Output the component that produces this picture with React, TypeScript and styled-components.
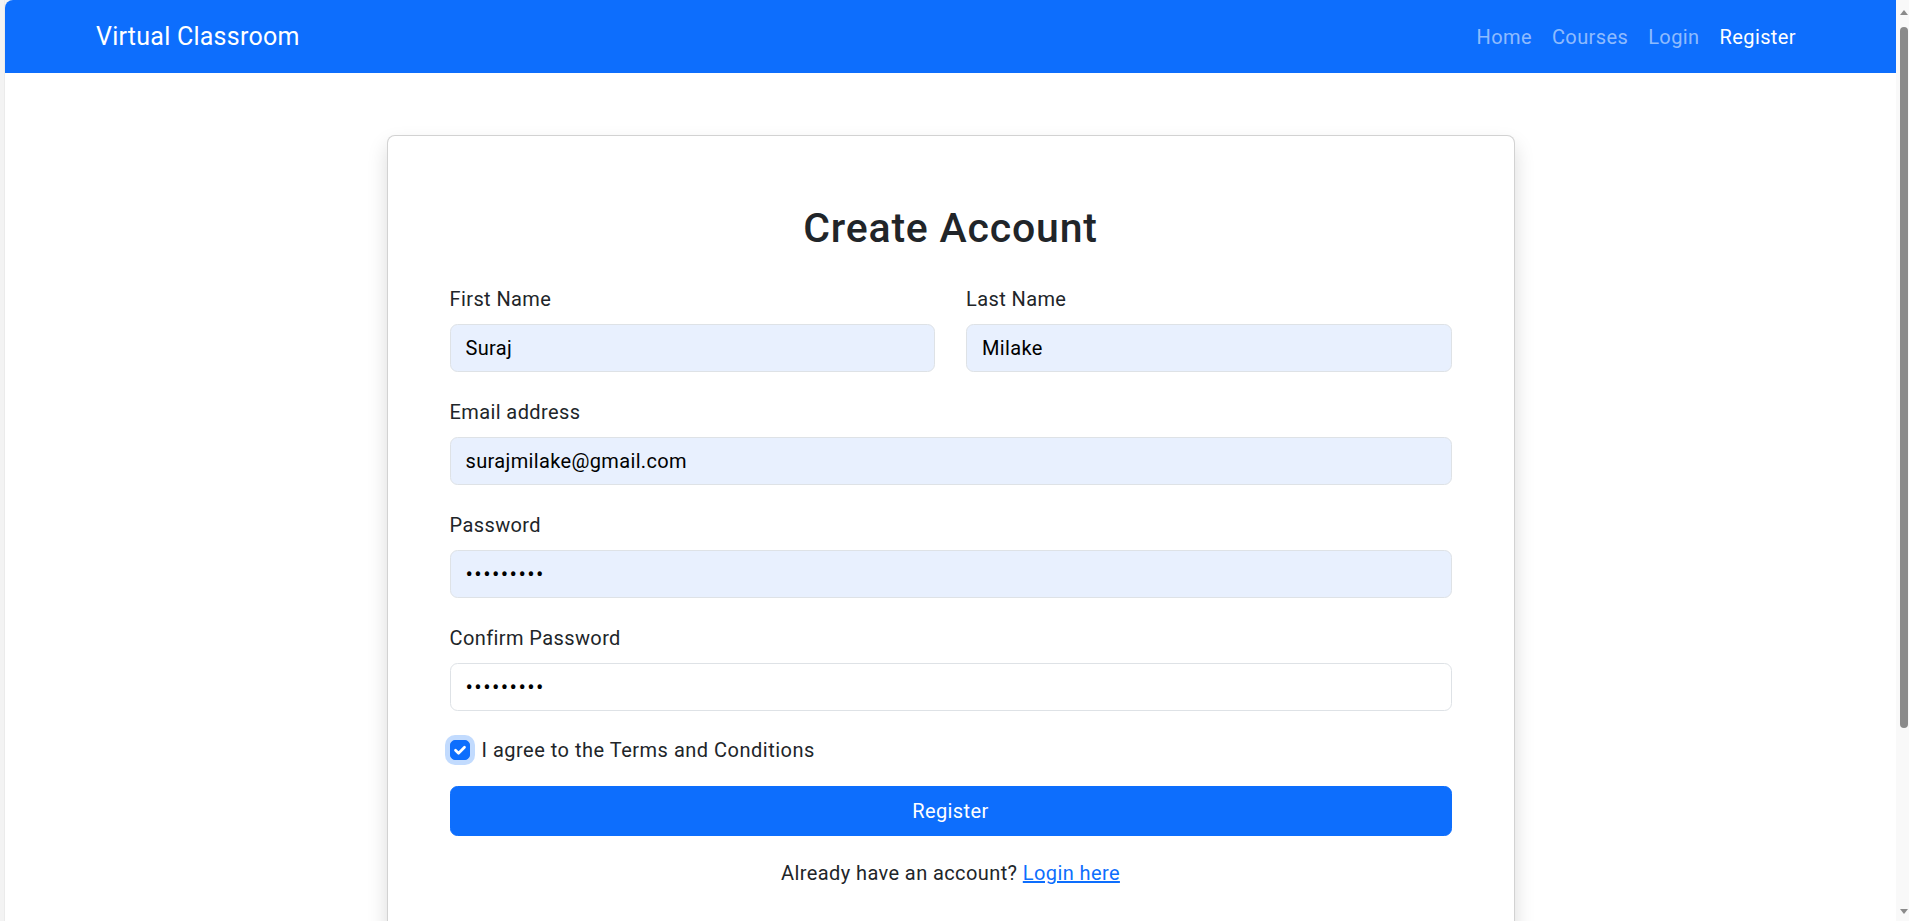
import React from "react";
import styled, { createGlobalStyle } from "styled-components";

const GlobalStyle = createGlobalStyle`
  * { box-sizing: border-box; }
  html, body { margin: 0; padding: 0; height: 100%; overflow: hidden; }
  body {
    font-family: "Segoe UI", Roboto, "Noto Sans", "Liberation Sans", sans-serif;
    color: #212529;
    background: #ffffff;
    letter-spacing: 0.4px;
  }
`;

const Viewport = styled.div`
  display: flex;
  height: 100vh;
  width: 100vw;
  overflow: hidden;
  background: #f3f3f3;
`;

const FrameEdge = styled.div`
  flex: 0 0 5px;
  background: #f3f3f3;
  border-right: 1px solid #ebebeb;
`;

const Page = styled.div`
  flex: 1;
  display: flex;
  flex-direction: column;
  overflow: hidden;
  background: #ffffff;
  border-top-left-radius: 8px;
`;

const Navbar = styled.nav`
  flex: 0 0 73px;
  display: flex;
  align-items: center;
  justify-content: space-between;
  padding: 0 90px 0 91px;
  background: #0d6efd;
`;

const Brand = styled.a`
  font-size: 25px;
  line-height: 30px;
  letter-spacing: 0.25px;
  color: #ffffff;
  text-decoration: none;
`;

const NavLinks = styled.ul`
  display: flex;
  list-style: none;
  margin: 0;
  padding: 0;
`;

const NavLink = styled.a<{ $active?: boolean }>`
  display: block;
  padding: 10px;
  font-size: 20px;
  line-height: 30px;
  letter-spacing: 0.4px;
  text-decoration: none;
  color: ${(p) => (p.$active ? "#ffffff" : "rgba(255, 255, 255, 0.55)")};
`;

const Main = styled.main`
  flex: 1;
  padding: 62px 0 60px;
`;

const Card = styled.section`
  width: 1128px;
  margin: 0 auto;
  border: 1px solid rgba(0, 0, 0, 0.175);
  border-radius: 8px;
  background: #ffffff;
  box-shadow: 0 10px 20px rgba(0, 0, 0, 0.15);
  padding: 60px 62px;
`;

const Title = styled.h2`
  margin: 8px 0 32px;
  text-align: center;
  font-size: 41px;
  line-height: 48px;
  font-weight: 500;
  letter-spacing: 0.8px;
  color: #212529;
`;

const Form = styled.form`
  display: flex;
  flex-direction: column;
`;

const Row = styled.div`
  display: grid;
  grid-template-columns: 1fr 1fr;
  column-gap: 31px;
`;

const Group = styled.div`
  margin-bottom: 25px;
`;

const Label = styled.label`
  display: block;
  margin-bottom: 10px;
  font-size: 20px;
  line-height: 30px;
  color: #212529;
`;

const Input = styled.input<{ $filled?: boolean }>`
  display: block;
  width: 100%;
  height: 48px;
  padding: 0 15px;
  font-family: inherit;
  font-size: 20px;
  letter-spacing: 0.35px;
  color: #000000;
  background: ${(p) => (p.$filled ? "#e8f0fe" : "#ffffff")};
  border: 1px solid #dee2e6;
  border-radius: 7.5px;
  outline: none;

  &[type="password"] {
    font-size: 22px;
    letter-spacing: 1.4px;
  }
`;

const CheckRow = styled.label`
  display: flex;
  align-items: center;
  gap: 12px;
  height: 30px;
  margin: -1px 0 21px;
  font-size: 20px;
  line-height: 30px;
  letter-spacing: 0.5px;
  color: #212529;
`;

const CheckBox = styled.span`
  display: flex;
  align-items: center;
  justify-content: center;
  width: 20px;
  height: 20px;
  border-radius: 5px;
  background: #0d6efd;
  border: 1px solid #0d6efd;
  box-shadow: 0 0 0 5px rgba(13, 110, 253, 0.25);
`;

const SubmitButton = styled.button`
  display: block;
  width: 100%;
  height: 50px;
  border: 1px solid #0d6efd;
  border-radius: 7.5px;
  background: #0d6efd;
  color: #ffffff;
  font-family: inherit;
  font-size: 20px;
  line-height: 30px;
  letter-spacing: 0.4px;
`;

const FooterText = styled.p`
  margin: 22px 0 0;
  text-align: center;
  font-size: 20px;
  line-height: 30px;
  color: #212529;
`;

const TextLink = styled.a`
  color: #0d6efd;
  text-decoration: underline;
`;

const ScrollRail = styled.div`
  flex: 0 0 13px;
  display: flex;
  flex-direction: column;
  align-items: flex-start;
  padding: 10px 1px 7px 4px;
  background: #f9f9f9;
`;

const ArrowUp = styled.span`
  width: 0;
  height: 0;
  border-left: 4px solid transparent;
  border-right: 4px solid transparent;
  border-bottom: 5px solid #8b8b8b;
`;

const ArrowDown = styled.span`
  margin-top: auto;
  width: 0;
  height: 0;
  border-left: 4px solid transparent;
  border-right: 4px solid transparent;
  border-top: 5px solid #8b8b8b;
`;

const Thumb = styled.span`
  width: 8px;
  height: 701px;
  margin-top: 12px;
  border-radius: 4px;
  background: #8b8b8b;
`;

export default function App() {
  return (
    <>
      <GlobalStyle />
      <Viewport>
        <FrameEdge />
        <Page>
          <Navbar>
            <Brand href="#">Virtual Classroom</Brand>
            <NavLinks>
              <li><NavLink href="#">Home</NavLink></li>
              <li><NavLink href="#">Courses</NavLink></li>
              <li><NavLink href="#">Login</NavLink></li>
              <li><NavLink href="#" $active>Register</NavLink></li>
            </NavLinks>
          </Navbar>
          <Main>
            <Card>
              <Title>Create Account</Title>
              <Form onSubmit={(e) => e.preventDefault()}>
                <Row>
                  <Group>
                    <Label>First Name</Label>
                    <Input $filled defaultValue="Suraj" />
                  </Group>
                  <Group>
                    <Label>Last Name</Label>
                    <Input $filled defaultValue="Milake" />
                  </Group>
                </Row>
                <Group>
                  <Label>Email address</Label>
                  <Input $filled type="email" defaultValue="surajmilake@gmail.com" />
                </Group>
                <Group>
                  <Label>Password</Label>
                  <Input $filled type="password" defaultValue="123456789" />
                </Group>
                <Group>
                  <Label>Confirm Password</Label>
                  <Input type="password" defaultValue="123456789" />
                </Group>
                <CheckRow>
                  <CheckBox>
                    <svg width="18" height="18" viewBox="0 0 20 20" fill="none">
                      <path d="M5 10.2l3.4 3.4 6.6-6.6" stroke="#ffffff" strokeWidth="3" strokeLinecap="round" strokeLinejoin="round" />
                    </svg>
                  </CheckBox>
                  I agree to the Terms and Conditions
                </CheckRow>
                <SubmitButton type="submit">Register</SubmitButton>
                <FooterText>
                  Already have an account? <TextLink href="#">Login here</TextLink>
                </FooterText>
              </Form>
            </Card>
          </Main>
        </Page>
        <ScrollRail>
          <ArrowUp />
          <Thumb />
          <ArrowDown />
        </ScrollRail>
      </Viewport>
    </>
  );
}
